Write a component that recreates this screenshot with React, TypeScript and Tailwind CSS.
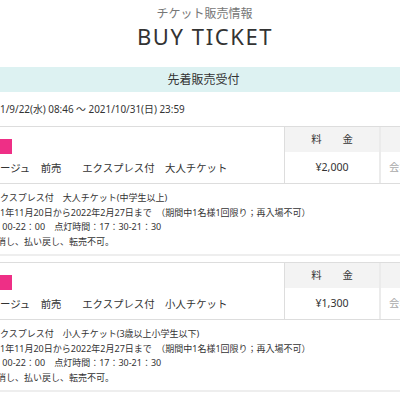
import React from "react";

const font = { fontFamily: '"Noto Sans", "Noto Sans CJK JP", sans-serif' };

function Ticket({ name, price, lines }: { name: string; price: string; lines: React.ReactNode[] }) {
  return (
    <div>
      <div className="grid grid-cols-[285px_96px_1fr] border-t border-b border-[#dddddd]">
        <div className="row-span-2 border-r border-[#dddddd] flex flex-col">
          <div className="mt-[12px] w-[12px] h-[15px] bg-[#ee2f86]" />
          <div className="mt-[7px] text-[10.4px] leading-[15px] text-[#333] whitespace-pre">{name}</div>
        </div>
        <div className="h-[25px] bg-[#f3f3f3] flex items-center justify-center text-[10.4px] text-[#333] whitespace-pre border-r-2 border-[#ebebeb]">料　　金</div>
        <div className="h-[25px] bg-[#f3f3f3]" />
        <div className="h-[31px] flex items-center justify-center text-[10.6px] text-[#333] border-r-2 border-[#ebebeb]">{price}</div>
        <div className="h-[31px] flex items-center pl-[8px] text-[10.4px] text-[#aaa] whitespace-nowrap">会場</div>
      </div>
      <div className="pt-[7px] pb-[5px] text-[9px] leading-[14.5px] text-[#333] border-b-2 border-[#eeeeee] whitespace-pre">
        {lines.map((l, i) => (
          <div key={i}>{l}</div>
        ))}
      </div>
    </div>
  );
}

export default function App() {
  return (
    <div className="w-[400px] h-[400px] overflow-hidden bg-white" style={font}>
      <div className="pt-[5px] pl-[9px] text-center text-[12px] leading-[17px] text-[#777]">チケット販売情報</div>
      <div className="mt-[3px] pl-[10px] text-center text-[22px] leading-[22px] tracking-[1.6px] text-[#333]">BUY TICKET</div>
      <div className="mt-[20px] pl-[7px] h-[25px] bg-[#ddf2f2] flex items-center justify-center text-[12px] text-[#333]">先着販売受付</div>
      <div className="mt-[10px] text-[9.9px] leading-[15px] text-[#333] whitespace-pre">1/9/22(水) 08:46 ～ 2021/10/31(日) 23:59</div>
      <div className="mt-[9px] flex flex-col gap-[6px]">
        <Ticket
          name={"ージュ　前売　　エクスプレス付　大人チケット"}
          price="¥2,000"
          lines={[
            "クスプレス付　大人チケット(中学生以上)",
            "1年11月20日から2022年2月27日まで　（期間中1名様1回限り；再入場不可）",
            " 00-22：00　点灯時間：17：30-21：30",
            <span className="ml-[-3px]">消し、払い戻し、転売不可。</span>,
          ]}
        />
        <Ticket
          name={"ージュ　前売　　エクスプレス付　小人チケット"}
          price="¥1,300"
          lines={[
            "クスプレス付　小人チケット(3歳以上小学生以下)",
            "1年11月20日から2022年2月27日まで　（期間中1名様1回限り；再入場不可）",
            " 00-22：00　点灯時間：17：30-21：30",
            <span className="ml-[-3px]">消し、払い戻し、転売不可。</span>,
          ]}
        />
      </div>
    </div>
  );
}
